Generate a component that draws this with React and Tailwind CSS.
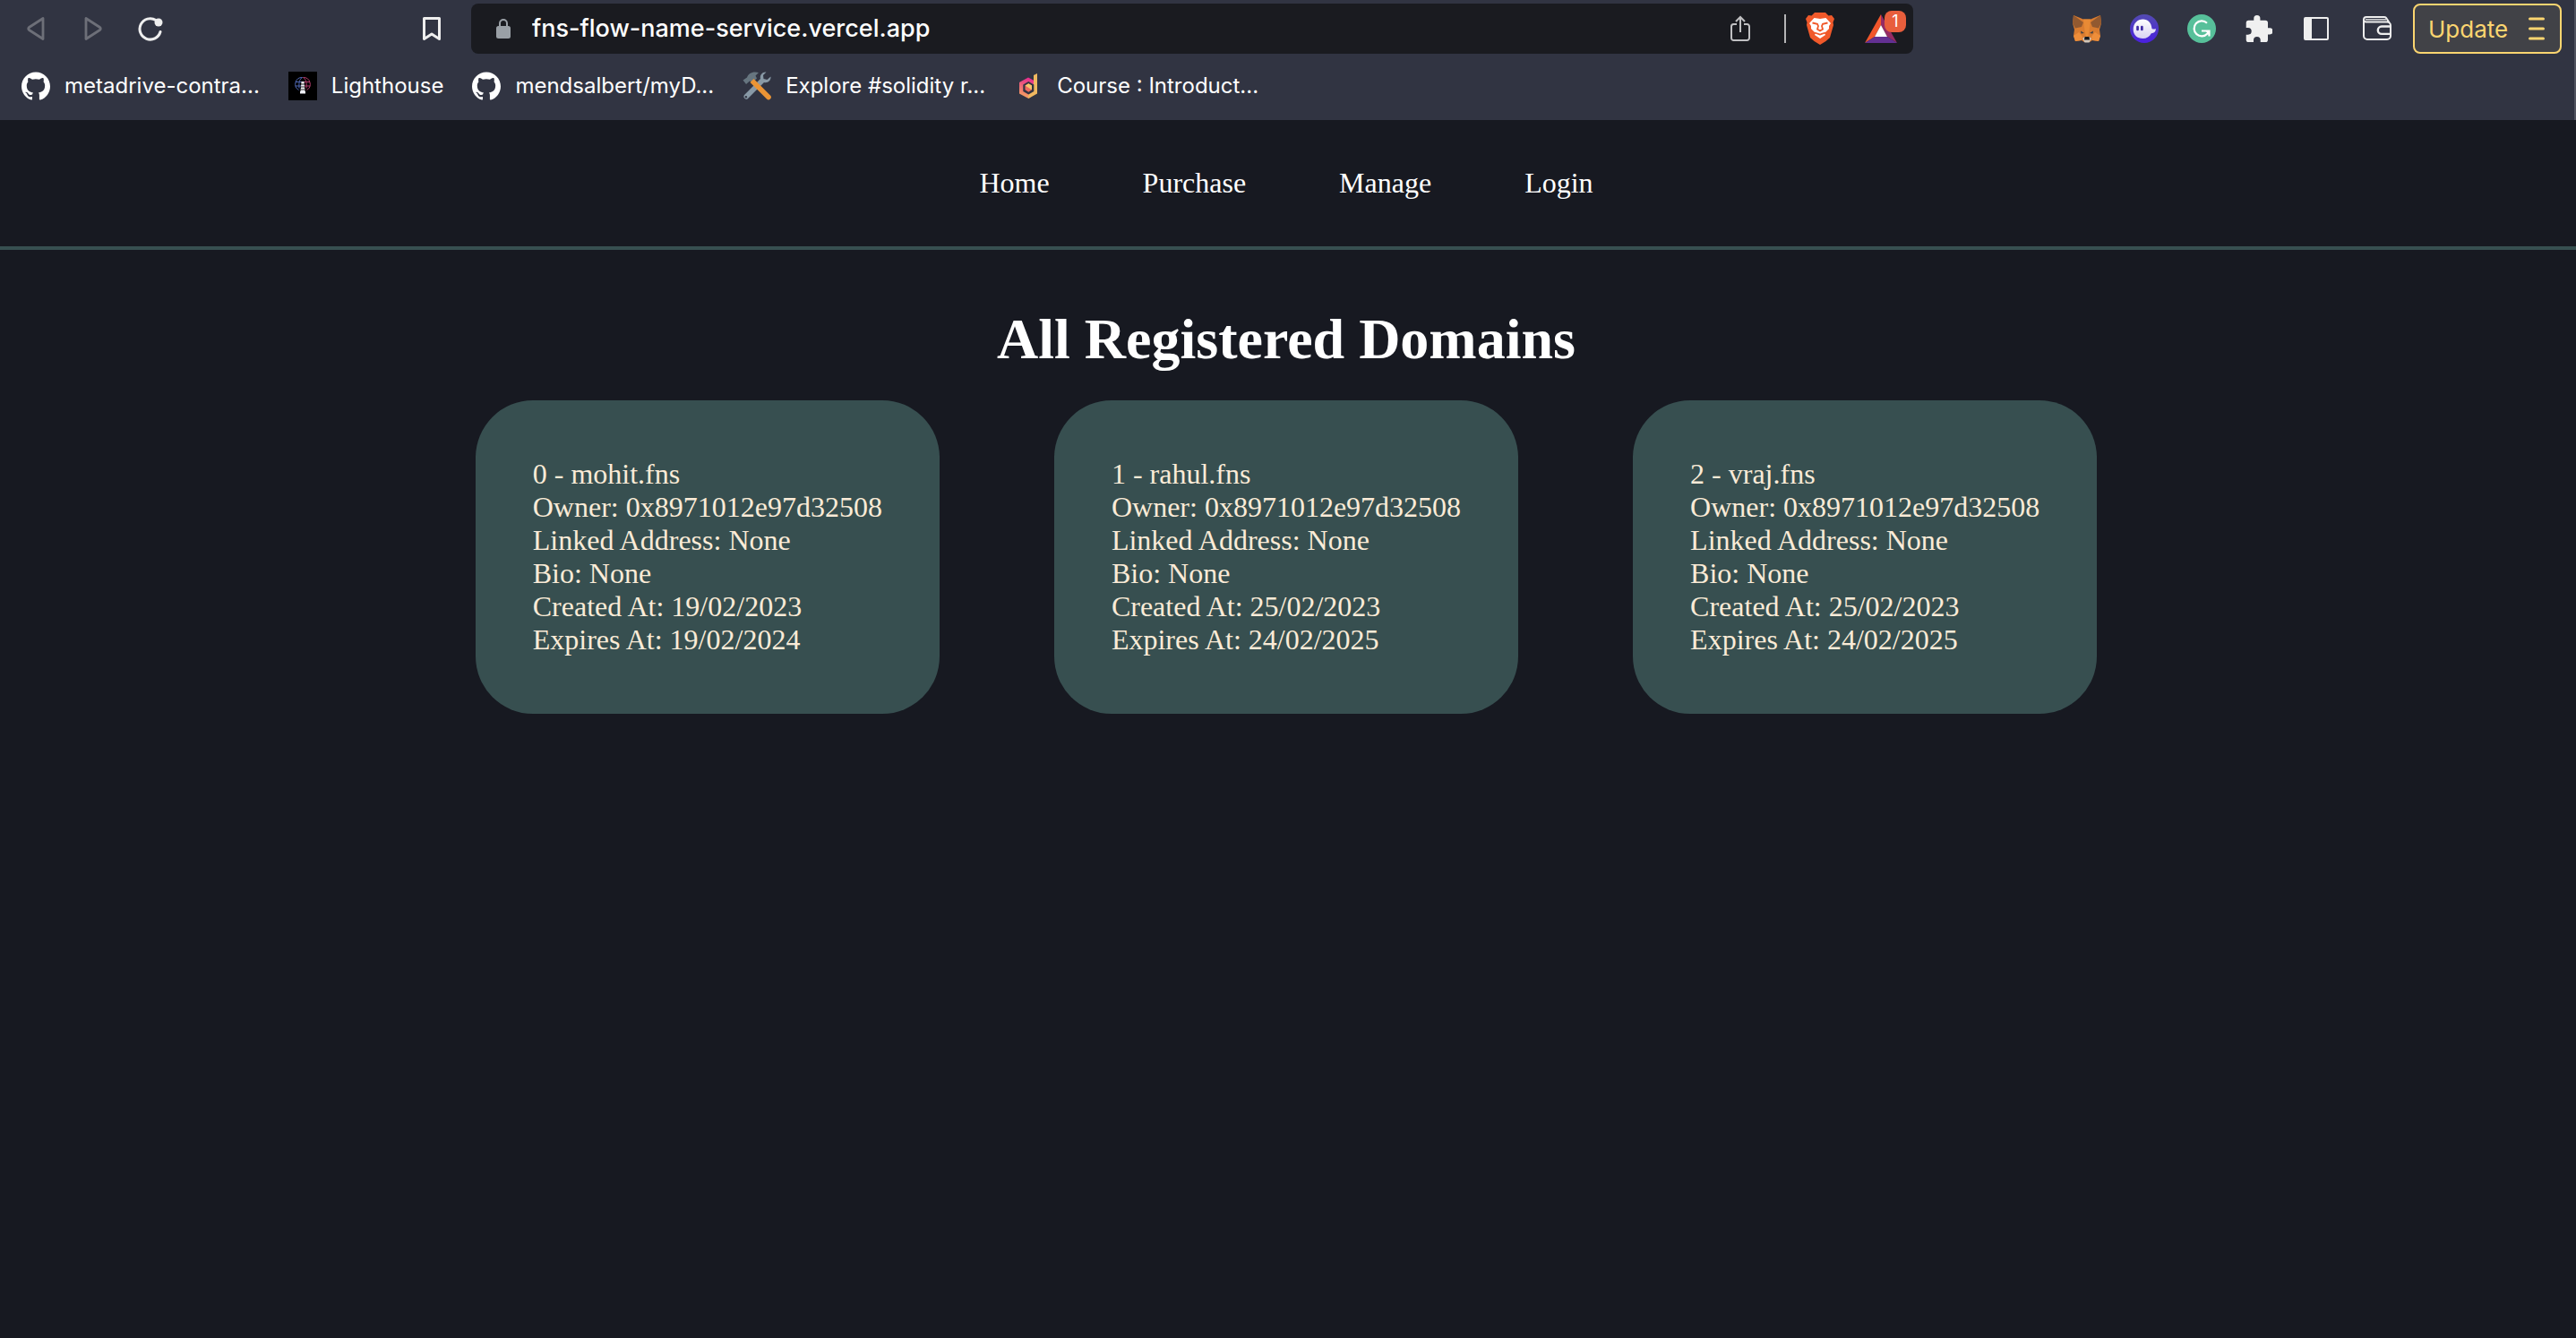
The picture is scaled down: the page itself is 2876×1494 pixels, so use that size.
import { SiGithub } from "react-icons/si";

const bookmarks = [
  { label: "metadrive-contra...", Icon: GithubIcon },
  { label: "Lighthouse", Icon: LighthouseIcon },
  { label: "mendsalbert/myD...", Icon: GithubIcon },
  { label: "Explore #solidity r...", Icon: ToolsIcon },
  { label: "Course : Introduct...", Icon: CourseIcon },
];

const extensions = [
  { label: "MetaMask", Icon: FoxIcon },
  { label: "Phantom", Icon: PhantomIcon },
  { label: "Grammarly", Icon: GrammarlyIcon },
  { label: "Extensions", Icon: PuzzleIcon },
  { label: "Sidebar", Icon: SidebarIcon },
];

const links = ["Home", "Purchase", "Manage", "Login"];

const domains = [
  { id: 0, name: "mohit.fns", created: "19/02/2023", expires: "19/02/2024" },
  { id: 1, name: "rahul.fns", created: "25/02/2023", expires: "24/02/2025" },
  { id: 2, name: "vraj.fns", created: "25/02/2023", expires: "24/02/2025" },
];

function GithubIcon() {
  return <SiGithub className="size-8 text-white" />;
}

function LighthouseIcon() {
  return (
    <svg viewBox="0 0 32 32" className="size-8">
      <rect width="32" height="32" fill="#000" />
      <g fill="none" strokeWidth="1">
        <path d="M15.500 6.500a7.500 7.500 0 0 0-4 14M15.500 6.500c-3 2-4 5-3.500 12M8 11.500h7M8 16h6" stroke="#4f68b4" />
        <path d="M16.500 6.500a7.500 7.500 0 0 1 4 14M16.500 6.500c3 2 4 5 3.500 12M17 11.500h7M18 16h6" stroke="#b03d6c" />
      </g>
      <path d="M14.500 11h3l1 11h-5z" fill="#f0f0f6" />
      <path d="M14 14h4M14 17h4M13.500 20h5" stroke="#333" strokeWidth="1" />
      <path d="M13 22h6v2.500h-6z" fill="#f0f0f6" />
    </svg>
  );
}

function ToolsIcon() {
  return (
    <svg viewBox="0 0 32 32" className="size-8">
      <path d="M26.500.5c-4-.5-7.500 3-6.500 7.500L1.800 26.200a2.900 2.900 0 0 0 4 4L24 12c4.500 1 8-2.500 7.500-6.500l-4 3.500-4-1-.5-4z" fill="#8899a6" />
      <circle cx="3.900" cy="28.200" r="1.200" fill="#313442" />
      <path d="M18 1C12-.8 6.500 1.500 5 6.500L.5 9.500 4 14l4-3.500 3.500 1.500 4.500-4.500-1.500-3z" fill="#66757f" />
      <path d="m12.500 8-4 4 18.500 18.500a2.800 2.800 0 0 0 4-4z" fill="#ea9435" />
    </svg>
  );
}

function CourseIcon() {
  return (
    <svg viewBox="0 0 32 32" className="size-8">
      <defs>
        <linearGradient id="course" x1="0.600" y1="0" x2="0.400" y2="1">
          <stop offset="0" stopColor="#e6288f" />
          <stop offset="0.450" stopColor="#ee6878" />
          <stop offset="1" stopColor="#f6a55f" />
        </linearGradient>
      </defs>
      <path d="M16 6.500 22.500 10v15l-6.200 5L6 24.500V12z" fill="url(#course)" />
      <path d="m22 4 4-2v22.500L16.300 30v-5l5.700-3z" fill="#f0b860" />
      <path d="m16.300 11 6 3.500v7.500l-6 3.500-6-3.500v-7.500z" fill="#313442" />
      <path d="m16.300 13.300 3.700 2.200v4.800l-3.700 2.400-3.800-2.400v-4.800z" fill="#ef6a5e" />
      <path d="m16.300 13.300 3.700 2.200v4.800l-3.700-2.300-3.800-2.500z" fill="#f8c66c" />
    </svg>
  );
}

function LockIcon() {
  return (
    <svg viewBox="0 0 16 22" className="h-[22px] w-4 shrink-0">
      <path d="M4 9V5a4 4 0 0 1 8 0v4" fill="none" stroke="#9aa0a6" strokeWidth="2" />
      <rect y="8" width="16" height="14" rx="2.500" fill="#9aa0a6" />
    </svg>
  );
}

function BraveIcon() {
  return (
    <svg viewBox="0 0 32 36" className="h-9 w-8">
      <path d="M10 0h12l3.500 3.500 3.500-.5 3 4-1.500 4 .5 3-4 14-4.500 4L16 36l-6.500-4L5 28 1 14l.5-3L0 7l3-4 3.500.5z" fill="#f0592a" />
      <path d="m9.500 6 6.500 1 6.500-1L28 12l-2 3v3l-5 5 1 2-6 4-6-4 1-2-5-5v-3l-2-3z" fill="#fff" />
      <path d="m7.500 11.500 5.500 1.300 1 2.200-1 3.500 3 2 3-2-1-3.500 1-2.200 5.500-1.300M10 22.500l6 2 6-2" fill="none" stroke="#f0592a" strokeWidth="1.800" />
    </svg>
  );
}

function BatIcon() {
  return (
    <svg viewBox="0 0 36 32" className="h-8 w-9">
      <path d="M18 0v12L11 25 0 32z" fill="#f1562b" />
      <path d="M18 0v12l7 13 11 7z" fill="#952b64" />
      <path d="M0 32 11 25h14l11 7z" fill="#633093" />
      <path d="m18 12 7 13H11z" fill="#fff" />
    </svg>
  );
}

function FoxIcon() {
  return (
    <svg viewBox="0 0 32 32" className="size-8">
      <path d="m1 1 11 4.500h8L31 1l1 9-2 7 1 7-2 6-7-1-3 2h-6l-3-2-7 1-2-6 1-7-2-7z" fill="#d97c30" />
      <path d="m1 1 11 8-2 5-7 1.500L0 10zM31 1 20 9l2 5 7 1.500 3-5.500z" fill="#925930" />
      <path d="m12 5.500 1.500 12.500L15 26h2l1.500-8L20 5.500z" fill="#e88a35" />
      <path d="m1 24 6-4 4 5-1 4-7 1zM31 24l-6-4-4 5 1 4 7 1z" fill="#ee8e3a" />
      <path d="m9 18.500 4 2.500-3.500.5zM23 18.500 19 21l3.500.5z" fill="#3a3f45" />
      <path d="m11 27 2.500-2h5l2.500 2-2.500 4.500h-5z" fill="#d2c6ba" />
      <path d="M13.500 25h5l.5 3.500h-6z" fill="#16191c" />
    </svg>
  );
}

function PhantomIcon() {
  return (
    <svg viewBox="0 0 32 32" className="size-8">
      <defs>
        <linearGradient id="phantom" x1="0" y1="0" x2="0" y2="1">
          <stop offset="0" stopColor="#534bb1" />
          <stop offset="1" stopColor="#4a1fe0" />
        </linearGradient>
        <linearGradient id="ghost" x1="0" y1="0" x2="0" y2="1">
          <stop offset="0" stopColor="#fff" />
          <stop offset="1" stopColor="#d9d2f2" />
        </linearGradient>
      </defs>
      <circle cx="16" cy="16" r="16" fill="url(#phantom)" />
      <path d="M3.700 17C3.700 10 8.500 5.500 14.500 5.500c5.500 0 9.500 4 10 10.500 1.400.8 2.800.8 4.300 0 .2 3-1.600 5.200-5 5.200C22 25 18.500 27 14.500 27 8 27 3.700 23 3.700 17Z" fill="url(#ghost)" />
      <rect x="7.200" y="12.800" width="2.700" height="5.400" rx="1.300" fill="#3f2aa5" />
      <rect x="12" y="12.800" width="2.700" height="5.400" rx="1.300" fill="#3f2aa5" />
    </svg>
  );
}

function GrammarlyIcon() {
  return (
    <svg viewBox="0 0 32 32" className="size-8" fill="none" stroke="#fff" strokeWidth="2.200">
      <circle cx="16" cy="16" r="16" fill="#57c09a" stroke="none" />
      <path d="M22 9.700A8.500 8.500 0 1 0 22.500 21.500L24 18.500M16 18.500h8.500v6" />
      <path d="M20 18h5v6z" fill="#fff" stroke="none" />
    </svg>
  );
}

function PuzzleIcon() {
  return (
    <svg viewBox="1.500 1 21 21" className="size-[30px]" fill="#f0f0f0">
      <path d="M20.500 11H19V7a2 2 0 0 0-2-2h-4V3.500a2.500 2.500 0 0 0-5 0V5H4a2 2 0 0 0-2 2v3.800h1.500a2.700 2.700 0 0 1 0 5.400H2V20a2 2 0 0 0 2 2h3.800v-1.500a2.700 2.700 0 0 1 5.400 0V22H17a2 2 0 0 0 2-2v-4h1.500a2.500 2.500 0 0 0 0-5z" />
    </svg>
  );
}

function SidebarIcon() {
  return (
    <svg viewBox="0 0 28 26" className="h-[26px] w-7">
      <rect x="1" y="1" width="26" height="24" rx="1" fill="none" stroke="#eee" strokeWidth="2" />
      <path d="M1 1h8v24H1z" fill="#eee" />
    </svg>
  );
}

function WalletIcon() {
  return (
    <svg viewBox="0 0 32 28" className="h-7 w-8" fill="none" stroke="#eee" strokeWidth="2">
      <path d="M1 4v18a4 4 0 0 0 4 4h22a4 4 0 0 0 4-4V10.500a4 4 0 0 0-4-4H3.500A2.500 2.500 0 0 1 1 4a3 3 0 0 1 3-3h20a3 3 0 0 1 2.500 1.500L30 8" />
      <path d="M3 3.800h23" strokeWidth="1.300" />
      <path d="M31 11.500H21a4.200 4.200 0 0 0 0 8.400h10" strokeWidth="2.400" />
    </svg>
  );
}

function Toolbar() {
  return (
    <div className="flex h-16 items-center py-1 pr-3.5 pl-[30px]">
      <div className="flex w-[496px] shrink-0 items-center">
        <button aria-label="Back" className="mr-11">
          <svg viewBox="0 0 20 28" className="h-7 w-5" fill="none" stroke="#6d6f78" strokeWidth="2.800" strokeLinejoin="round">
            <path d="M18 2.500v23L2.500 15.500a1.800 1.800 0 0 1 0-3z" />
          </svg>
        </button>
        <button aria-label="Forward" className="mr-10">
          <svg viewBox="0 0 20 28" className="h-7 w-5" fill="none" stroke="#6d6f78" strokeWidth="2.800" strokeLinejoin="round">
            <path d="M2 2.500v23l15.500-10a1.800 1.800 0 0 0 0-3z" />
          </svg>
        </button>
        <button aria-label="Reload">
          <svg viewBox="0 0 28 28" className="size-7" fill="none" stroke="#eee" strokeWidth="3" strokeLinecap="round">
            <path d="M20 4.500A11.700 11.700 0 1 0 25 17.500" />
            <circle cx="23" cy="7" r="4.500" fill="#eee" stroke="none" />
          </svg>
        </button>
        <button aria-label="Bookmark this tab" className="mr-[34px] ml-auto">
          <svg viewBox="0 0 20 28" className="h-7 w-5" fill="none" stroke="#eee" strokeWidth="3" strokeLinejoin="round">
            <path d="M1.500 2.500h17v23L10 20l-8.500 5.500z" />
          </svg>
        </button>
      </div>
      <div className="flex h-14 w-[1610px] shrink items-center rounded-lg bg-[#1a1b20] pr-2 pl-7">
        <LockIcon />
        <input
          aria-label="Address"
          defaultValue="fns-flow-name-service.vercel.app"
          className="ml-6 min-w-0 flex-1 bg-transparent text-[27px] leading-8 font-medium text-white outline-none"
        />
        <button aria-label="Share" className="mr-[38px]">
          <svg viewBox="0 0 22 30" className="h-[30px] w-[22px]" fill="none" stroke="#c0c0c2" strokeWidth="2">
            <path d="M7 10H3.500A2.500 2.500 0 0 0 1 12.500v13A2.500 2.500 0 0 0 3.500 28h15a2.500 2.500 0 0 0 2.500-2.500v-13a2.500 2.500 0 0 0-2.500-2.500H15M11 19V2M6 7l5-5 5 5" />
          </svg>
        </button>
        <span className="mr-[22px] h-8 w-0.5 bg-[#b4b4b6]" />
        <button aria-label="Brave Shields" className="mr-[34px]">
          <BraveIcon />
        </button>
        <button aria-label="Brave Rewards" className="relative mr-2.5">
          <BatIcon />
          <span className="absolute -top-1 -right-2.5 flex size-6 items-center justify-center rounded-lg bg-[#e85e3c] text-lg leading-6 text-white">
            1
          </span>
        </button>
      </div>
      <div className="ml-auto flex shrink-0 items-center">
        <div className="mr-9 flex items-center gap-8">
          {extensions.map(({ label, Icon }) => (
            <button key={label} aria-label={label} className="flex size-8 items-center justify-center">
              <Icon />
            </button>
          ))}
        </div>
        <button aria-label="Wallet" className="mr-6">
          <WalletIcon />
        </button>
        <button className="flex h-14 w-[166px] items-center justify-between rounded-lg border-2 border-[#fbd570] bg-[#414247] pr-[17px] pl-[15px] text-[26px] text-[#fbd570]">
          Update
          <svg viewBox="0 0 18 26" className="h-[26px] w-[18px]" stroke="#fbd570" strokeWidth="3" strokeLinecap="round">
            <path d="M1.500 2h15M1.500 13h15M1.500 24h15" />
          </svg>
        </button>
      </div>
    </div>
  );
}

export default function App() {
  return (
    <div className="min-h-screen bg-[#171921]">
      <header className="h-[134px] border-r-2 border-[#51535f] bg-[#313442] font-['Inter',sans-serif]">
        <Toolbar />
        <nav aria-label="Bookmarks" className="flex items-center gap-8 pt-4 pl-6">
          {bookmarks.map(({ label, Icon }) => (
            <a key={label} href="#" className="flex items-center gap-4 text-2xl text-white">
              <Icon />
              {label}
            </a>
          ))}
        </nav>
      </header>
      <div className="font-['Liberation_Serif',serif] text-[32px] leading-[37px]">
        <nav aria-label="Main" className="flex justify-center gap-[104px] border-b-4 border-[#374f50] py-[52px] pr-1 text-white">
          {links.map((label) => (
            <a key={label} href="#">{label}</a>
          ))}
        </nav>
        <main className="flex flex-col items-center gap-8 pt-16 pr-1">
          <h1 className="text-[64px] leading-[72px] font-bold text-white">All Registered Domains</h1>
          <div className="flex flex-wrap justify-center gap-32">
            {domains.map(({ id, name, created, expires }) => (
              <article key={id} className="rounded-[64px] bg-[#374f50] p-16 text-[#faebd7]">
                <h2>{id} - {name}</h2>
                <p>Owner: 0x8971012e97d32508</p>
                <p>Linked Address: None</p>
                <p>Bio: None</p>
                <p>Created At: {created}</p>
                <p>Expires At: {expires}</p>
              </article>
            ))}
          </div>
        </main>
      </div>
    </div>
  );
}
